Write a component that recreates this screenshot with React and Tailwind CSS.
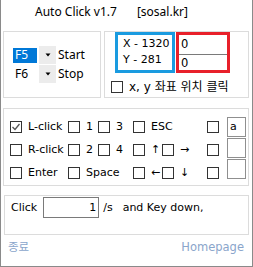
import React from "react";

const G = "font-['DejaVu_Sans','Noto_Sans_CJK_KR',sans-serif] text-[11px] leading-[14px] text-black";
const UI = "font-['Noto_Sans','Noto_Sans_CJK_KR',sans-serif] text-[12px] leading-[16px] text-black";

function Cb({ checked }) {
  return (
    <span className="w-[12px] h-[12px] border border-[#333333] bg-white shrink-0 flex items-center justify-center">
      {checked && (
        <svg width="10" height="10" viewBox="0 0 10 10">
          <polyline points="1.5,5 4,7.5 8.5,2" fill="none" stroke="#555555" strokeWidth="1.3" />
        </svg>
      )}
    </span>
  );
}

function Unit({ w, label }) {
  return (
    <span className="flex items-center gap-[6px] shrink-0" style={{ width: w }}>
      <Cb checked={label === "L-click"} />
      {label && <span className="whitespace-nowrap">{label}</span>}
    </span>
  );
}

function Arrow() {
  return (
    <span className="w-[17px] h-[18px] bg-[#ececec] flex items-center justify-center">
      <svg width="6" height="4" viewBox="0 0 6 4">
        <polygon points="0.5,0.5 5.5,0.5 3,3.5" fill="#000" />
      </svg>
    </span>
  );
}

export default function App() {
  return (
    <div className="w-[253px] h-[267px] bg-white border-x border-b border-[#8a8a8a] flex flex-col">
      <div className={`${UI} h-[31px] pt-[4px] pl-[34px] flex`}>
        <span>Auto Click v1.7</span>
        <span className="ml-[20px]">[sosal.kr]</span>
      </div>

      <div className="flex ml-[2px] h-[67px] gap-[3px]">
        <div className="w-[98px] h-full border border-[#dcdcdc] pt-[14px] pl-[9px] flex flex-col gap-[1px]">
          <div className={`${UI} flex items-center h-[18px]`}>
            <span className="w-[24px] h-[15px] bg-[#0078d7] text-white pl-[2px] flex items-center">F5</span>
            <span className="ml-[2px]"><Arrow /></span>
            <span className="ml-[2px]">Start</span>
          </div>
          <div className={`${UI} flex items-center h-[18px]`}>
            <span className="w-[24px] h-[15px] pl-[2px] flex items-center">F6</span>
            <span className="ml-[2px]"><Arrow /></span>
            <span className="ml-[2px]">Stop</span>
          </div>
        </div>

        <div className="w-[145px] h-full border border-[#dcdcdc] flex flex-col">
          <div className="flex ml-[10px]">
            <div className={`${G} w-[60px] h-[41px] border-[3px] border-[#1a9be0] pl-[5px] pt-[1px] flex flex-col whitespace-nowrap`}>
              <span className="leading-[16px]">X - 1320</span>
              <span className="leading-[16px]">Y - 281</span>
            </div>
            <div className={`${G} ml-[1px] w-[54px] h-[41px] border-[3px] border-[#e8202a] flex flex-col`}>
              <div className="h-[19px] pl-[2px] pt-[2px] leading-[14px] text-[11.5px]">0</div>
              <div className="flex-1 border-t border-[#7a7a7a] pl-[2px] pt-[1px] leading-[14px] text-[11.5px]">0</div>
            </div>
          </div>
          <div className="flex items-center ml-[6px] mt-[7px] gap-[6px]">
            <Cb />
            <span className="font-['DejaVu_Sans','Noto_Sans_CJK_KR',sans-serif] text-[12px] leading-[14px] text-black whitespace-nowrap">x, y 좌표 위치 클릭</span>
          </div>
        </div>
      </div>

      <div className={`${G} ml-[2px] mt-[10px] w-[246px] h-[78px] border border-[#dcdcdc] flex`}>
        <div className="pl-[6px] pt-[6px] w-[219px] flex flex-col">
          <div className="flex items-center h-[23px]">
            <Unit w={58} label="L-click" />
            <Unit w={30} label="1" />
            <Unit w={35} label="3" />
            <Unit w={74} label="ESC" />
            <Unit w={12} />
          </div>
          <div className="flex items-center h-[23px]">
            <Unit w={58} label="R-click" />
            <Unit w={30} label="2" />
            <Unit w={35} label="4" />
            <Unit w={29} label="↑" />
            <Unit w={45} label="→" />
            <Unit w={12} />
          </div>
          <div className="flex items-center h-[23px]">
            <Unit w={58} label="Enter" />
            <Unit w={65} label="Space" />
            <Unit w={29} label="←" />
            <Unit w={45} label="↓" />
            <Unit w={12} />
          </div>
        </div>
        <div className="ml-[4px] pt-[8px] flex flex-col gap-[1px]">
          <div className="w-[19px] h-[20px] border border-[#8f8f8f] pl-[2px] pt-[2px]">a</div>
          <div className="w-[19px] h-[20px] border border-[#8f8f8f]"></div>
          <div className="w-[19px] h-[20px] border border-[#8f8f8f]"></div>
        </div>
      </div>

      <div className={`${G} ml-[3px] mt-[9px] w-[245px] h-[40px] border border-[#dcdcdc]`}>
        <div className="flex items-center h-[21px] mt-[1px] pl-[6px] whitespace-nowrap">
          <span>Click</span>
          <span className="ml-[6px] w-[56px] h-[21px] border border-[#7a7a7a] flex items-center justify-end pr-[2px]">1</span>
          <span className="ml-[4px]">/s</span>
          <span className="ml-[10px]">and Key down,</span>
        </div>
      </div>

      <div className="flex justify-between mt-[5px] pl-[7px] pr-[8px] font-['DejaVu_Sans','Noto_Sans_CJK_KR',sans-serif] text-[11.5px] leading-[14px] text-[#8aa5cb]">
        <span>종료</span>
        <span>Homepage</span>
      </div>
    </div>
  );
}
